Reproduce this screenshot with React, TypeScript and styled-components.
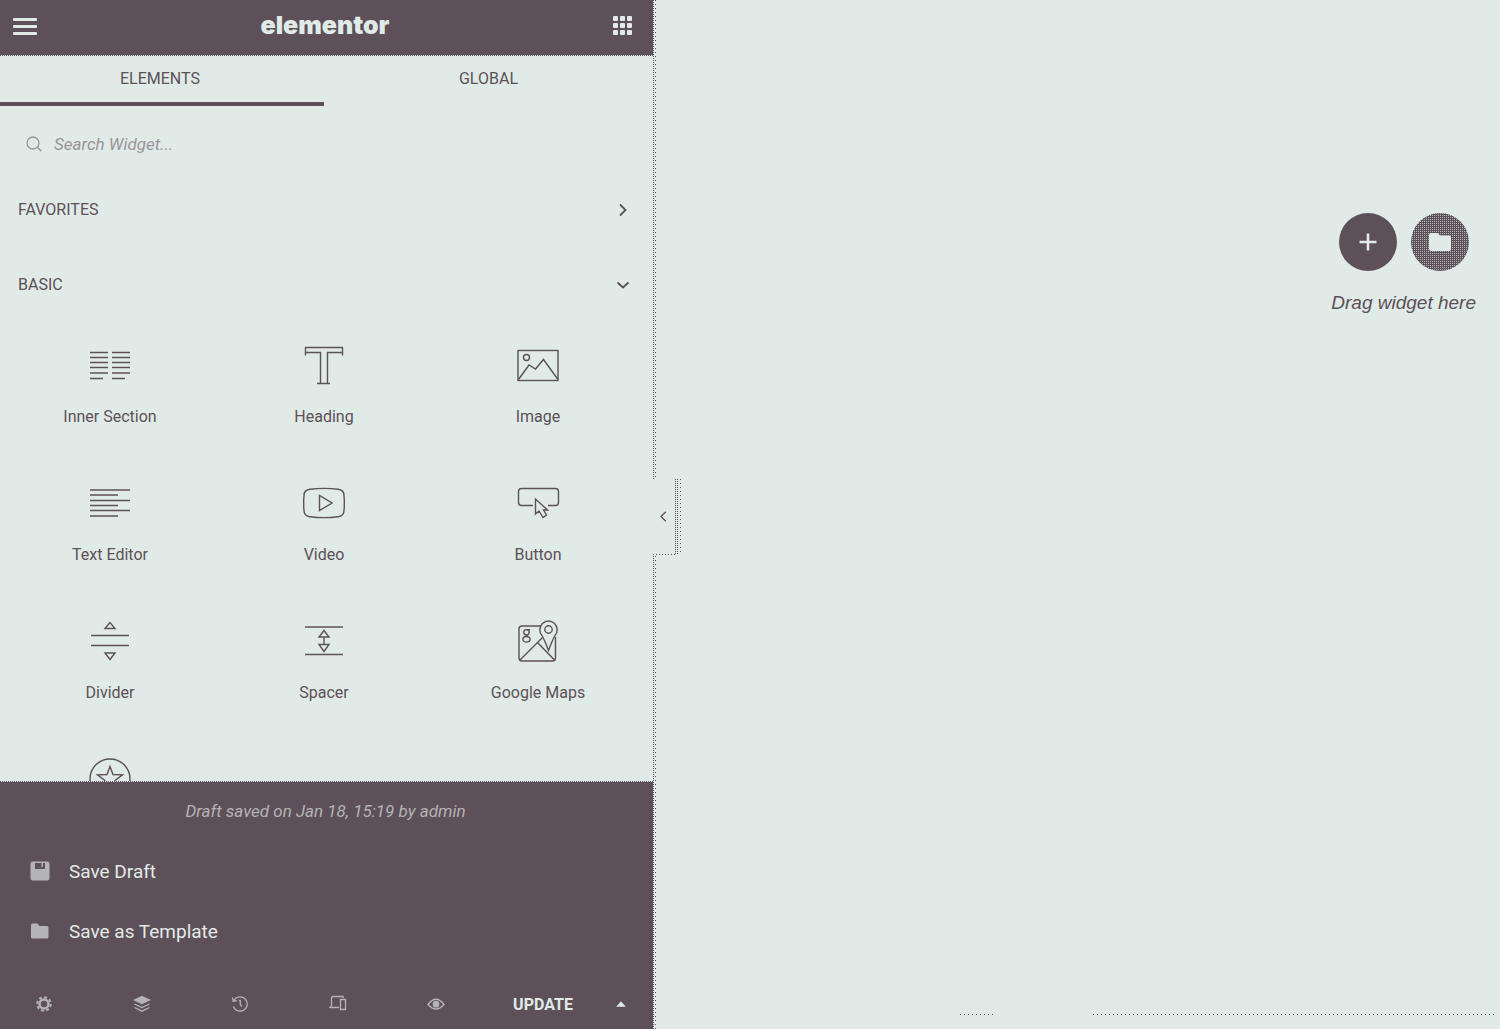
import React from "react";
import styled, { createGlobalStyle } from "styled-components";

const DARK = "#5d5058";
const LIGHT = "#e0ebe7";
const MUTED = "#9a949a";
const SOFT = "#b4b4b6";

const GlobalStyle = createGlobalStyle`
  * { box-sizing: border-box; }
  body { margin: 0; background: ${LIGHT}; color: ${DARK}; font-family: Roboto, "Liberation Sans", sans-serif; }
  button { font: inherit; color: inherit; background: none; border: 0; padding: 0; cursor: pointer; }
`;

const Page = styled.div`
  display: grid;
  grid-template-columns: minmax(0, 653fr) minmax(0, 847fr);
  height: 100vh;
`;

const Panel = styled.aside`
  display: flex;
  flex-direction: column;
  min-height: 0;
  height: 100vh;
`;

const Header = styled.header`
  display: flex;
  align-items: center;
  justify-content: space-between;
  height: 56px;
  padding: 0 20px 4px 12px;
  flex: none;
  color: ${LIGHT};
  background: repeating-linear-gradient(90deg, ${DARK} 0 1px, ${LIGHT} 1px 2px) bottom / 100% 1px no-repeat, ${DARK};
`;

const IconButton = styled.button`
  display: flex;
  align-items: center;
  justify-content: center;
`;

const Logo = styled.h1`
  margin: 0;
  padding-bottom: 2px;
  font: 900 25px/32px Inter, sans-serif;
`;

const Tabs = styled.nav`
  display: grid;
  grid-template-columns: 324fr 329fr;
  flex: none;
  height: 50px;
`;

const Tab = styled.button<{ $active?: boolean }>`
  && {
    font-size: 16px;
    line-height: 20px;
    padding-right: ${(p) => (p.$active ? "4px" : "0")};
    border-bottom: 4px solid ${(p) => (p.$active ? DARK : "transparent")};
  }
`;

const Search = styled.label`
  display: flex;
  align-items: center;
  gap: 12px;
  flex: none;
  height: 66px;
  padding: 10px 26px 0;
  color: ${MUTED};
`;

const SearchInput = styled.input`
  flex: 1;
  min-width: 0;
  height: 40px;
  padding: 0;
  border: 0;
  outline: 0;
  background: transparent;
  color: ${DARK};
  font: italic 17px/20px Roboto, sans-serif;
  &::placeholder { color: ${MUTED}; opacity: 1; }
`;

const Body = styled.div`
  flex: 1;
  min-height: 0;
  overflow: hidden;
`;

const SectionToggle = styled.button`
  display: flex;
  align-items: center;
  justify-content: space-between;
  width: 100%;
  height: 75px;
  && { padding: 0 23px 0 18px; font-size: 16px; }
`;

const WidgetGrid = styled.div`
  display: grid;
  grid-template-columns: repeat(3, 1fr);
  grid-auto-rows: 138px;
  padding: 0 8px 0 3px;
`;

const WidgetCard = styled.button`
  display: flex;
  flex-direction: column;
  align-items: center;
  gap: 16px;
  && { padding-top: 19px; font-size: 16px; line-height: 24px; }
`;

const Footer = styled.footer`
  display: flex;
  flex-direction: column;
  flex: none;
  color: ${LIGHT};
  padding-top: 18px;
  background: repeating-linear-gradient(90deg, ${DARK} 0 1px, ${LIGHT} 1px 2px) top / 100% 1px no-repeat, ${DARK};
`;

const Status = styled.p`
  margin: 0 0 18px;
  padding-right: 2px;
  text-align: center;
  color: ${SOFT};
  font-style: italic;
  font-size: 17px;
  line-height: 24px;
`;

const MenuItem = styled.button`
  display: flex;
  align-items: center;
  gap: 19px;
  height: 60px;
  && { padding-left: 30px; font-size: 19px; }
  svg { color: ${SOFT}; }
`;

const Toolbar = styled.div`
  display: grid;
  grid-template-columns: repeat(5, 98fr) 106fr 50fr;
  height: 50px;
  margin-top: 18px;
  padding-right: 7px;
`;

const Tool = styled(IconButton)`
  && { padding-right: 10px; color: ${SOFT}; }
`;

const Update = styled(IconButton)`
  && { font-size: 16px; font-weight: 700; }
`;

const Canvas = styled.main`
  position: relative;
  display: flex;
  flex-direction: column;
  align-items: flex-end;
  min-height: 0;
  padding: 213px 0 14px;
`;

const PanelEdge = styled.div`
  position: absolute;
  left: 0;
  top: 0;
  bottom: 0;
  width: 3px;
  background:
    repeating-linear-gradient(${DARK} 0 1px, transparent 1px 2px) left / 1px 100% no-repeat,
    repeating-linear-gradient(${DARK} 0 1px, transparent 1px 4px) right / 1px 100% no-repeat;
`;

const Collapse = styled.button`
  position: absolute;
  left: 0;
  top: 479px;
  display: flex;
  align-items: center;
  width: 28px;
  height: 76px;
  && {
    padding: 0 0 2px 7px;
    background:
      repeating-linear-gradient(${DARK} 0 1px, transparent 1px 2px) 22px 0 / 1px 100% no-repeat,
      repeating-linear-gradient(${DARK} 0 1px, transparent 1px 2px) 24px 0 / 1px 100% no-repeat,
      repeating-linear-gradient(${DARK} 0 1px, transparent 1px 4px) 27px 0 / 1px 100% no-repeat,
      repeating-linear-gradient(90deg, ${DARK} 0 1px, transparent 1px 3px) bottom left / 22px 1px no-repeat,
      ${LIGHT};
  }
`;

const DropZone = styled.section`
  display: flex;
  flex-direction: column;
  align-items: center;
  gap: 20px;
  padding-right: 24px;
`;

const RoundRow = styled.div`
  display: flex;
  gap: 14px;
`;

const RoundButton = styled.button<{ $dotted?: boolean }>`
  display: flex;
  align-items: center;
  justify-content: center;
  width: 58px;
  height: 58px;
  border-radius: 50%;
  && {
    color: ${LIGHT};
    background: ${(p) =>
      p.$dotted ? `conic-gradient(#b4b7b8 25%, ${DARK} 0) 0 0 / 2px 2px` : DARK};
  }
`;

const DropText = styled.p`
  margin: 0;
  font: italic 19px/24px "Liberation Sans", Arial, sans-serif;
`;

const Baseline = styled.div`
  display: grid;
  grid-template-columns: 34fr 401fr;
  column-gap: 99px;
  width: 63%;
  margin: auto 6px 0 0;
`;

const DottedRule = styled.span`
  height: 1px;
  background: repeating-linear-gradient(90deg, ${DARK} 0 1px, transparent 1px 4px);
`;

const WidgetSvg = ({ children }: { children: React.ReactNode }) => (
  <svg width="48" height="48" viewBox="0 0 48 48" fill="none" stroke="currentColor" strokeWidth="1.4" aria-hidden="true">
    {children}
  </svg>
);

const widgets: { name: string; art: React.ReactNode }[] = [
  {
    name: "Inner Section",
    art: <path d="M4 11.5h18M26 11.5h18M4 16.5h18M26 16.5h18M4 21.5h18M26 21.5h18M4 26.5h18M26 26.5h18M4 32h18M26 32h18M4 37.5h13M26 37.5h13" />,
  },
  {
    name: "Heading",
    art: <path d="M5.5 14.5v-8h37v8M5.5 11.5h15v31M42.5 11.5h-15v31M17 42.5h13" />,
  },
  {
    name: "Image",
    art: (
      <>
        <rect x="4" y="9.5" width="40" height="30" />
        <circle cx="12.5" cy="16.5" r="3" />
        <path d="M4.5 38.5 15 24l6.5 4 8-9.5L44 38.5" />
      </>
    ),
  },
  {
    name: "Text Editor",
    art: <path d="M4 11h40M4 16h28M4 21.5h40M4 26.5h28M4 31.5h40M4 37h28" />,
  },
  {
    name: "Video",
    art: (
      <>
        <path d="M10 10.3Q24 8.5 38 10.3Q44 11 44 16.5Q44.7 24 44 31.5Q44 37 38 37.7Q24 39.5 10 37.7Q4 37 4 31.5Q3.3 24 4 16.5Q4 11 10 10.3Z" />
        <path d="M19.5 16.5v15L32 24Z" />
      </>
    ),
  },
  {
    name: "Button",
    art: (
      <>
        <path d="M19 26.5H7.5q-3 0-3-3v-11q0-3 3-3h34q3 0 3 3v11q0 3-3 3H34" />
        <path d="M21.5 20v15l3.5-3 4 6.5 3.5-2.5-3-5h4Z" />
      </>
    ),
  },
  {
    name: "Divider",
    art: <path d="M24 5.5 19 11.5h10ZM5 18.5h38M5 28.5h38M24 42.5l-5-6.5h10Z" />,
  },
  {
    name: "Spacer",
    art: <path d="M5 10h38M5 37.5h38M24 13.5 19 20h10ZM24 20v7.5M24 34.5l-5-7h10Z" />,
  },
  {
    name: "Google Maps",
    art: (
      <>
        <path d="M27 9H8q-3 0-3 3v29q0 3 3 3h30.5q3 0 3-3V20" />
        <path d="M34.5 33.5Q31 24 28 18.5A8.7 8.7 0 1 1 41 18.5Q38 24 34.5 33.5Z" />
        <circle cx="34.5" cy="12.5" r="3.7" />
        <circle cx="12.5" cy="15.3" r="2.7" />
        <ellipse cx="12.5" cy="22.3" rx="3.6" ry="2.8" />
        <path d="M13 12.7h3M12 18l1.5 1.5M6 43l22.5-22.5M23.5 25.5 40.5 43" />
      </>
    ),
  },
  {
    name: "",
    art: (
      <>
        <circle cx="24" cy="24" r="20" />
        <path d="m24 11.500 3 8 9.500.300-7.500 5.700 2.500 8.500-7.500-5-7.500 5 2.500-8.500-7.500-5.700 9.500-.300Z" />
      </>
    ),
  },
];

const Chevron = ({ down }: { down?: boolean }) => (
  <svg width="14" height="14" viewBox="0 0 14 14" fill="none" stroke="currentColor" strokeWidth="1.8" aria-hidden="true">
    <path d={down ? "M1.5 4.5 7 9.5l5.500-5" : "M4 1.5 9.5 7 4 12.5"} />
  </svg>
);

const ToolSvg = ({ children }: { children: React.ReactNode }) => (
  <svg width="18" height="18" viewBox="0 0 18 18" fill="none" stroke="currentColor" strokeWidth="1.3" aria-hidden="true">
    {children}
  </svg>
);

const tools = [
  {
    name: "Settings",
    art: (
      <>
        <circle cx="9" cy="9" r="4.5" strokeWidth="2.5" />
        <circle cx="9" cy="9" r="6.8" strokeWidth="2" strokeDasharray="2.9 2.44" />
      </>
    ),
  },
  {
    name: "Navigator",
    art: (
      <>
        <path d="m9 1.5 7.5 3.5L9 8.5 1.5 5Z" fill="currentColor" />
        <path d="m1.5 9 7.5 3.5L16.5 9M1.5 12.5 9 16.2l7.5-3.7" />
      </>
    ),
  },
  {
    name: "History",
    art: <path d="M2.8 5.5a7.2 7.2 0 1 1-.5 6M1.5 2.5l.7 3.8 3.8-.6M8 5.5h1.3v4.3l1.5 1.7" />,
  },
  {
    name: "Responsive Mode",
    art: <path d="M2.5 11V3q0-1.5 1.5-1.5h10V3M2.5 11 1 12.5h9M11.5 4.5h5v10h-5Z" />,
  },
  {
    name: "Preview Changes",
    art: (
      <>
        <path d="M1 9.5q8-10.5 16 0-8 9-16 0Z" />
        <circle cx="9" cy="9.2" r="2.7" fill="currentColor" />
      </>
    ),
  },
];

export default function App() {
  return (
    <>
      <GlobalStyle />
      <Page>
        <Panel>
          <Header>
            <IconButton aria-label="Menu">
              <svg width="26" height="20" viewBox="0 0 26 20" fill="currentColor" aria-hidden="true">
                <rect x="1" y="2" width="24" height="3" rx="1" />
                <rect x="1" y="9" width="24" height="3" rx="1" />
                <rect x="1" y="16" width="24" height="3" rx="1" />
              </svg>
            </IconButton>
            <Logo>elementor</Logo>
            <IconButton aria-label="Widgets">
              <svg width="21" height="20" viewBox="0 0 21 20" fill="currentColor" aria-hidden="true">
                {[0, 7, 14].map((y) =>
                  [1, 8, 15].map((x) => <rect key={`${x}-${y}`} x={x} y={y} width="5" height="5" rx="1" />)
                )}
              </svg>
            </IconButton>
          </Header>
          <Tabs>
            <Tab $active>ELEMENTS</Tab>
            <Tab>GLOBAL</Tab>
          </Tabs>
          <Body>
            <Search>
              <svg width="16" height="16" viewBox="0 0 16 16" fill="none" stroke="currentColor" strokeWidth="1.3" aria-hidden="true">
                <circle cx="7" cy="7" r="6" />
                <path d="m11.3 11.3 4 4" />
              </svg>
              <SearchInput type="text" aria-label="Search Widget" placeholder="Search Widget..." />
            </Search>
            <SectionToggle>
              FAVORITES
              <Chevron />
            </SectionToggle>
            <SectionToggle>
              BASIC
              <Chevron down />
            </SectionToggle>
            <WidgetGrid>
              {widgets.map((w) => (
                <WidgetCard key={w.name}>
                  <WidgetSvg>{w.art}</WidgetSvg>
                  {w.name}
                </WidgetCard>
              ))}
            </WidgetGrid>
          </Body>
          <Footer>
            <Status>Draft saved on Jan 18, 15:19 by admin</Status>
            <MenuItem>
              <svg width="20" height="20" viewBox="0 0 20 20" fill="currentColor" aria-hidden="true">
                <path fillRule="evenodd" d="M3 .5h14q2.5 0 2.5 2.5v14q0 2.5-2.5 2.5H3Q.5 19.5.5 17V3Q.5.5 3 .5ZM5 2v6h10V2h-2v4h-1.5V2Z" />
              </svg>
              Save Draft
            </MenuItem>
            <MenuItem>
              <svg width="20" height="20" viewBox="0 0 20 20" fill="currentColor" aria-hidden="true">
                <path d="M1 4q0-1.5 1.5-1.5h5L9.5 5H17q1.5 0 1.5 1.5V16q0 1.5-1.5 1.5H2.5Q1 17.5 1 16Z" />
              </svg>
              Save as Template
            </MenuItem>
            <Toolbar>
              {tools.map((t) => (
                <Tool key={t.name} aria-label={t.name}>
                  <ToolSvg>{t.art}</ToolSvg>
                </Tool>
              ))}
              <Update>UPDATE</Update>
              <IconButton aria-label="Save options">
                <svg width="10" height="6" viewBox="0 0 10 6" fill="currentColor" aria-hidden="true">
                  <path d="M5 .3 9.8 5.7H.2Z" />
                </svg>
              </IconButton>
            </Toolbar>
          </Footer>
        </Panel>
        <Canvas>
          <PanelEdge />
          <Collapse aria-label="Hide panel">
            <svg width="7" height="11" viewBox="0 0 7 11" fill="none" stroke="currentColor" strokeWidth="1.3" aria-hidden="true">
              <path d="M5.8.8 1 5.5l4.8 4.7" />
            </svg>
          </Collapse>
          <DropZone>
            <RoundRow>
              <RoundButton aria-label="Add section">
                <svg width="18" height="18" viewBox="0 0 18 18" stroke="currentColor" strokeWidth="2.6" aria-hidden="true">
                  <path d="M9 .5v17M.5 9h17" />
                </svg>
              </RoundButton>
              <RoundButton $dotted aria-label="Add template">
                <svg width="24" height="20" viewBox="0 0 24 20" fill="currentColor" aria-hidden="true">
                  <path d="M1 3q0-2 2-2h6.500l2.500 2.500h9q2 0 2 2V17q0 2-2 2H3q-2 0-2-2Z" />
                </svg>
              </RoundButton>
            </RoundRow>
            <DropText>Drag widget here</DropText>
          </DropZone>
          <Baseline>
            <DottedRule />
            <DottedRule />
          </Baseline>
        </Canvas>
      </Page>
    </>
  );
}
